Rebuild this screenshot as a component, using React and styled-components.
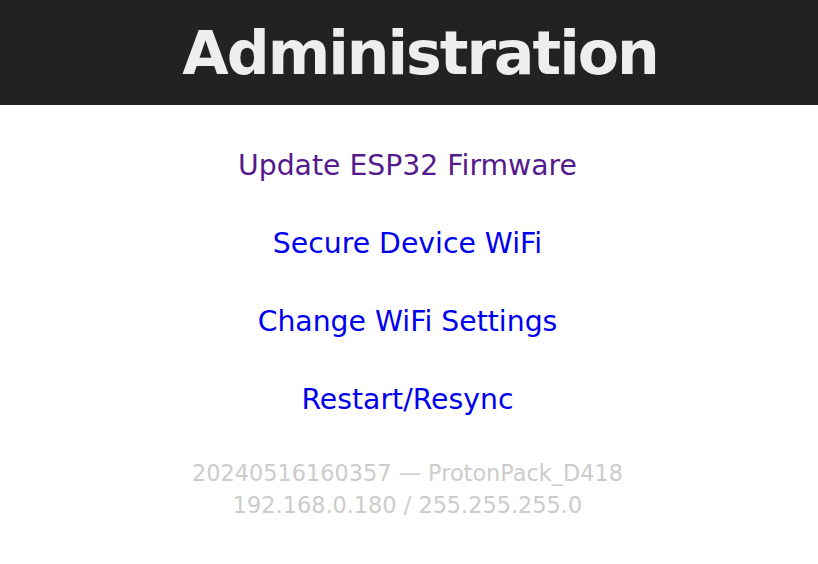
import React from 'react';
import styled, { createGlobalStyle } from 'styled-components';

const GlobalStyle = createGlobalStyle`
    html, body {
        margin: 0;
        padding: 0;
        background: #fff;
    }
    body {
        font-family: "DejaVu Sans", Verdana, sans-serif;
    }
`;

const Header = styled.header`
    background: #222;
    height: 105px;
    display: flex;
    align-items: center;
    justify-content: center;
    padding-left: 22px;

    h1 {
        margin: 0;
        color: #eee;
        font-size: 60px;
        font-weight: bold;
        letter-spacing: -2px;
    }
`;

const Menu = styled.nav`
    display: flex;
    flex-direction: column;
    align-items: center;
    gap: 44px;
    padding-top: 44px;
    padding-right: 3px;
`;

const MenuLink = styled.a`
    font-size: 28.3px;
    line-height: 34px;
    text-decoration: none;
    color: ${props => props.visited ? '#551a8b' : '#0000ee'};
`;

const Info = styled.div`
    margin-top: 40px;
    padding-right: 3px;
    text-align: center;
    color: #ccc;
    font-size: 22.4px;
    line-height: 32px;
`;

function App () {
    const links = [
        { label: 'Update ESP32 Firmware', visited: true },
        { label: 'Secure Device WiFi' },
        { label: 'Change WiFi Settings' },
        { label: 'Restart/Resync' },
    ];
    return(
        <>
            <GlobalStyle />
            <Header><h1>Administration</h1></Header>
            <Menu>
                {links.map(l => (
                    <MenuLink key={l.label} href="#" visited={l.visited ? 1 : 0}>{l.label}</MenuLink>
                ))}
            </Menu>
            <Info>
                <div>20240516160357 — ProtonPack_D418</div>
                <div>192.168.0.180 / 255.255.255.0</div>
            </Info>
        </>);
}

export default App;
